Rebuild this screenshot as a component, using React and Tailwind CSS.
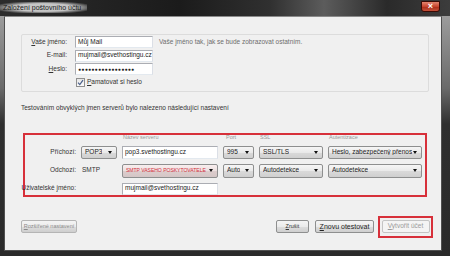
import React from 'react'

function Caret() {
  return (
    <span className="w-0 h-0 border-l-[2.5px] border-r-[2.5px] border-t-[3px] border-l-transparent border-r-transparent border-t-[#111] shrink-0" />
  )
}

function Select({ children, className = '', textClass = 'text-[#222]' }) {
  return (
    <div
      className={`flex items-center justify-between pl-[3px] pr-[4px] border border-[#8e8f8f] rounded-[2px] bg-[linear-gradient(#f6f6f6,#e9e9e9_50%,#dadada_51%,#cfcfcf)] ${className}`}
    >
      <span className={`whitespace-nowrap overflow-hidden ${textClass}`}>{children}</span>
      <Caret />
    </div>
  )
}

function Input({ children, className = '' }) {
  return (
    <div className={`flex items-center pl-[2px] bg-white border border-[#abadb3] border-b-[#e3e9ef] border-r-[#dbdfe6] text-[#222] whitespace-nowrap overflow-hidden ${className}`}>
      {children}
    </div>
  )
}

function Button({ children, className = '' }) {
  return (
    <div
      className={`flex items-center justify-center h-[13px] border border-[#8e8f8f] rounded-[2px] bg-[linear-gradient(#f4f4f4,#ebebeb_50%,#dddddd_51%,#cfcfcf)] whitespace-nowrap ${className}`}
    >
      {children}
    </div>
  )
}

export default function App() {
  return (
    <div
      className="w-[450px] h-[256px] flex flex-col bg-[#3a3a3a] text-[6.5px] leading-none text-[#333]"
      style={{ fontFamily: '"Liberation Sans", Arial, sans-serif' }}
    >
      {/* title bar */}
      <div className="h-[16px] flex items-start justify-between bg-[linear-gradient(90deg,#2c2c2c_0%,#1b1b1b_40%,#303030_60%,#5c5c5c_72%,#2a2a2a_86%,#3c3c3c_100%)]">
        <div className="mt-[2px] h-[11px] pl-[3px] pr-[6px] flex items-center bg-[radial-gradient(ellipse_at_center,rgba(215,215,215,0.9)_50%,rgba(215,215,215,0)_85%)] text-[#1a1a1a] text-[7px]">
          Založení poštovního účtu
        </div>
        <div className="mr-[10px] mt-[1px] w-[19px] h-[11px] flex items-center justify-center rounded-b-[3px] border border-[#3a0a04] bg-[linear-gradient(#e3856f,#c8452f_50%,#a92b16_51%,#c4503a)] text-white text-[9px] font-bold">
          ×
        </div>
      </div>

      {/* frame + content */}
      <div className="flex-1 flex pl-[4px] pr-[8px] pb-[5px] bg-[linear-gradient(#9c9c9c,#6a6a6a_30%,#2f2f2f_45%,#2a2a2a)]">
        <div className="flex-1 flex flex-col bg-[#f0f0f0] border border-[#505050] border-t-[#8a8a8a] pt-[17px] pl-[16px] pr-[12px]">
          {/* group box */}
          <div className="h-[58px] border border-[#dcdcdc] rounded-[2px] pt-[1px] flex flex-col">
            <div className="flex items-center h-[12px]">
              <div className="w-[45px] text-right"><span className="underline">V</span>aše jméno:</div>
              <Input className="ml-[8px] w-[78px] h-[12px]">Můj Mail</Input>
              <div className="ml-[6px] text-[#6d6d6d] whitespace-nowrap">Vaše jméno tak, jak se bude zobrazovat ostatním.</div>
            </div>
            <div className="flex items-center h-[12px] mt-[1.5px]">
              <div className="w-[45px] text-right">E-mail:</div>
              <Input className="ml-[8px] w-[78px] h-[12px]">mujmail@svethostingu.cz</Input>
            </div>
            <div className="flex items-center h-[12px] mt-[1.5px]">
              <div className="w-[45px] text-right"><span className="underline">H</span>eslo:</div>
              <Input className="ml-[8px] w-[78px] h-[12px] text-[5px] tracking-[0.3px] text-[#111]">●●●●●●●●●●●●●●●●●</Input>
            </div>
            <div className="flex items-center mt-[3px] ml-[54px] gap-[2px]">
              <div className="w-[9px] h-[9px] border border-[#8f8f8f] bg-[linear-gradient(#e6e6e6,#fafafa)] flex items-center justify-center">
                <svg width="7" height="7" viewBox="0 0 7 7">
                  <path d="M1 3.6 L2.8 5.6 L6 1.2" fill="none" stroke="#4a5f8a" strokeWidth="1.2" />
                </svg>
              </div>
              <div><span className="underline">P</span>amatovat si heslo</div>
            </div>
          </div>

          <div className="mt-[13px] whitespace-nowrap">
            Testováním obvyklých jmen serverů bylo nalezeno následující nastavení
          </div>

          {/* detected settings */}
          <div className="mt-[21px] mx-[2px] h-[64px] border-2 border-[#d7303a] grid grid-cols-[51px_36px_96px_31px_64px_94px] gap-x-[5px] content-start">
            <div />
            <div />
            <div className="pl-[1px] h-[6px] flex items-center text-[5.5px] text-[#999]">Název serveru</div>
            <div className="pl-[3px] h-[6px] flex items-center text-[5.5px] text-[#999]">Port</div>
            <div className="pl-[1px] h-[6px] flex items-center text-[5.5px] text-[#999]">SSL</div>
            <div className="pl-[1px] h-[6px] flex items-center text-[5.5px] text-[#999]">Autentizace</div>

            <div className="mt-[5px] flex items-center justify-end whitespace-nowrap">Příchozí:</div>
            <Select className="mt-[5px] h-[13px]">POP3</Select>
            <Input className="mt-[5px] h-[13px]">pop3.svethostingu.cz</Input>
            <Select className="mt-[5px] h-[13px]">995</Select>
            <Select className="mt-[5px] h-[13px]">SSL/TLS</Select>
            <Select className="mt-[5px] h-[13px]">Heslo, zabezpečený přenos</Select>

            <div className="mt-[5px] flex items-center justify-end whitespace-nowrap">Odchozí:</div>
            <div className="mt-[5px] flex items-center pl-[1px]">SMTP</div>
            <Select
              className="mt-[5px] h-[14px] pl-[2px] pr-[3px] bg-[linear-gradient(#f8eeee,#ecdfdf_50%,#dccccc_51%,#d4c6c6)]"
              textClass="text-[#d32f3b] text-[5.1px] tracking-[-0.05px]"
            >
              SMTP VAŠEHO POSKYTOVATELE
            </Select>
            <Select className="mt-[5px] h-[14px]">Auto</Select>
            <Select className="mt-[5px] h-[14px]">Autodetekce</Select>
            <Select className="mt-[5px] h-[14px]">Autodetekce</Select>

            <div className="mt-[5px] flex items-center justify-end whitespace-nowrap">Uživatelské jméno:</div>
            <div />
            <Input className="mt-[5px] h-[12px]">mujmail@svethostingu.cz</Input>
          </div>

          {/* buttons */}
          <div className="mt-[19px] flex items-center">
            <Button className="w-[56px] text-[#8a8a8a] text-[5.5px] border-[#b5b5b5]">
              <span><span className="underline">R</span>ozšířené nastavení</span>
            </Button>
            <div className="flex-1" />
            <Button className="w-[33px] text-[5.5px] text-[#333]">
              <span><span className="underline">Z</span>rušit</span>
            </Button>
            <Button className="ml-[6px] w-[59px] text-[7px] text-[#222]">
              <span><span className="underline">Z</span>novu otestovat</span>
            </Button>
            <div className="ml-[4px] -mr-[4px] w-[55px] h-[22px] border-2 border-[#d7303a] flex items-center justify-center">
              <Button className="w-[48px] text-[#9a9a9a] border-[#c4c4c4] bg-none bg-[#f4f4f4]">
                <span><span className="underline">V</span>ytvořit účet</span>
              </Button>
            </div>
          </div>
        </div>
      </div>
    </div>
  )
}
